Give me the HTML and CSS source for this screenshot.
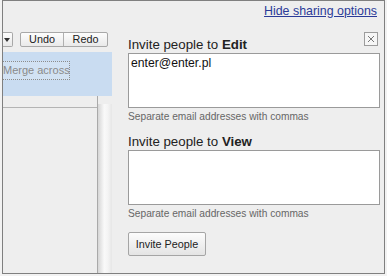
FILE: index.html
```html
<!DOCTYPE html>
<html lang="en">
<head>
  <meta charset="UTF-8" />
  <title>Sharing options</title>
  <link rel="stylesheet" href="styles.css">
</head>
<body>
  <div class="marco">
    <div class="hoja">
      <div class="barra">
        <div class="desplegable">
          <svg width="6" height="4" viewBox="0 0 6 4"><path d="M0 0H6L3 4Z" fill="#333"/></svg>
        </div>
        <div class="grupo">
          <div class="boton">Undo</div>
          <div class="boton">Redo</div>
        </div>
      </div>
      <div class="seleccion">
        <div class="combinar">Merge across</div>
      </div>
      <div class="celdas">
        <div class="columna">
          <div class="fila"></div>
        </div>
        <div class="sombra"></div>
      </div>
    </div>

    <div class="panel">
      <a class="ocultar" href="#">Hide sharing options</a>
      <div class="cabecera">
        <div class="etiqueta">Invite people to <b>Edit</b></div>
        <div class="cerrar">
          <svg width="12" height="12" viewBox="0 0 12 12"><path d="M3 3L9 9M9 3L3 9" stroke="#777" stroke-width="1"/></svg>
        </div>
      </div>
      <textarea class="correos">enter@enter.pl</textarea>
      <div class="ayuda">Separate email addresses with commas</div>

      <div class="etiqueta segunda">Invite people to <b>View</b></div>
      <textarea class="correos"></textarea>
      <div class="ayuda">Separate email addresses with commas</div>

      <button class="invitar">Invite People</button>
    </div>
  </div>
</body>
</html>
```

FILE: styles.css
```css
html, body {
  margin: 0;
  padding: 0;
  background: #f2f2f2;
  font-family: 'Liberation Sans', Arial, sans-serif;
  overflow: hidden;
}

.marco {
  margin-left: 2px;
  width: 383px;
  height: 274px;
  box-sizing: border-box;
  border: 1px solid #7f7f7f;
  background: #eeeeee;
  display: flex;
}

/* hoja de calculo de fondo */
.hoja {
  width: 109px;
  display: flex;
  flex-direction: column;
  padding-top: 31px;
}

.barra {
  display: flex;
  height: 15px;
}

.desplegable {
  width: 10px;
  box-sizing: border-box;
  border: 1px solid #a8a8a8;
  border-left: none;
  border-radius: 0 2px 2px 0;
  background: linear-gradient(#fdfdfd, #e8e8e8);
  display: flex;
  align-items: center;
  padding-left: 1px;
}

.grupo {
  margin-left: 7px;
  display: flex;
  border: 1px solid #a8a8a8;
  border-radius: 2px;
  background: linear-gradient(#fdfdfd, #e9e9e9);
}

.boton {
  width: 42px;
  font-size: 10.8px;
  line-height: 13px;
  text-align: center;
  color: #222;
}

.boton + .boton {
  width: 43px;
  border-left: 1px solid #b0b0b0;
}

.seleccion {
  margin-top: 5px;
  height: 44px;
  background: #c9dcf1;
  padding-top: 9px;
  box-sizing: border-box;
}

.combinar {
  width: 67px;
  height: 19px;
  box-sizing: border-box;
  border: 1px dotted #8c8c8c;
  border-left: none;
  background: #d2e2f3;
  color: #8a8a8a;
  font-size: 11px;
  line-height: 17px;
  white-space: nowrap;
}

.celdas {
  flex: 1;
  display: flex;
}

.columna {
  width: 95px;
  box-sizing: border-box;
  border-right: 1px solid #a9a9a9;
}

.fila {
  height: 12px;
  box-sizing: border-box;
  border-bottom: 1px solid #b4b4b4;
}

.sombra {
  flex: 1;
  margin-top: 8px;
  background: linear-gradient(to right, #d6d6d6, #f9f9f9 45%, #f4f4f4 70%, #e6e6e6);
}

/* panel de compartir */
.panel {
  width: 272px;
  box-sizing: border-box;
  padding: 0 4px 0 16px;
  display: flex;
  flex-direction: column;
}

.ocultar {
  margin-top: 3px;
  margin-right: 3px;
  align-self: flex-end;
  font-size: 12.4px;
  line-height: 15px;
  color: #2b3b98;
  text-decoration: underline;
}

.cabecera {
  margin-top: 13px;
  display: flex;
  justify-content: space-between;
  align-items: flex-start;
}

.etiqueta {
  margin-top: 5px;
  font-size: 13.3px;
  line-height: 15px;
  color: #222;
}

.etiqueta.segunda {
  margin-top: 11px;
}

.cerrar {
  width: 14px;
  height: 14px;
  box-sizing: border-box;
  margin-right: 2px;
  border: 1px solid #9c9c9c;
  background: #f6f6f6;
  display: flex;
  align-items: center;
  justify-content: center;
}

.correos {
  margin: 1px 0 0 0;
  width: 252px;
  height: 55px;
  box-sizing: border-box;
  border: 1px solid #9a9a9a;
  padding: 2px 2px;
  background: white;
  font-family: 'Liberation Sans', Arial, sans-serif;
  font-size: 12.2px;
  line-height: 14px;
  color: #111;
  resize: none;
  outline: none;
  overflow: hidden;
}

.ayuda {
  margin-top: 3px;
  font-size: 10.2px;
  line-height: 12px;
  color: #666;
}

.invitar {
  margin-top: 12px;
  width: 78px;
  height: 24px;
  padding: 0;
  box-sizing: border-box;
  border: 1px solid #a5a5a5;
  border-radius: 2px;
  background: linear-gradient(#fcfcfc, #e4e4e4);
  font-family: 'Liberation Sans', Arial, sans-serif;
  font-size: 10.8px;
  color: #222;
}
```
